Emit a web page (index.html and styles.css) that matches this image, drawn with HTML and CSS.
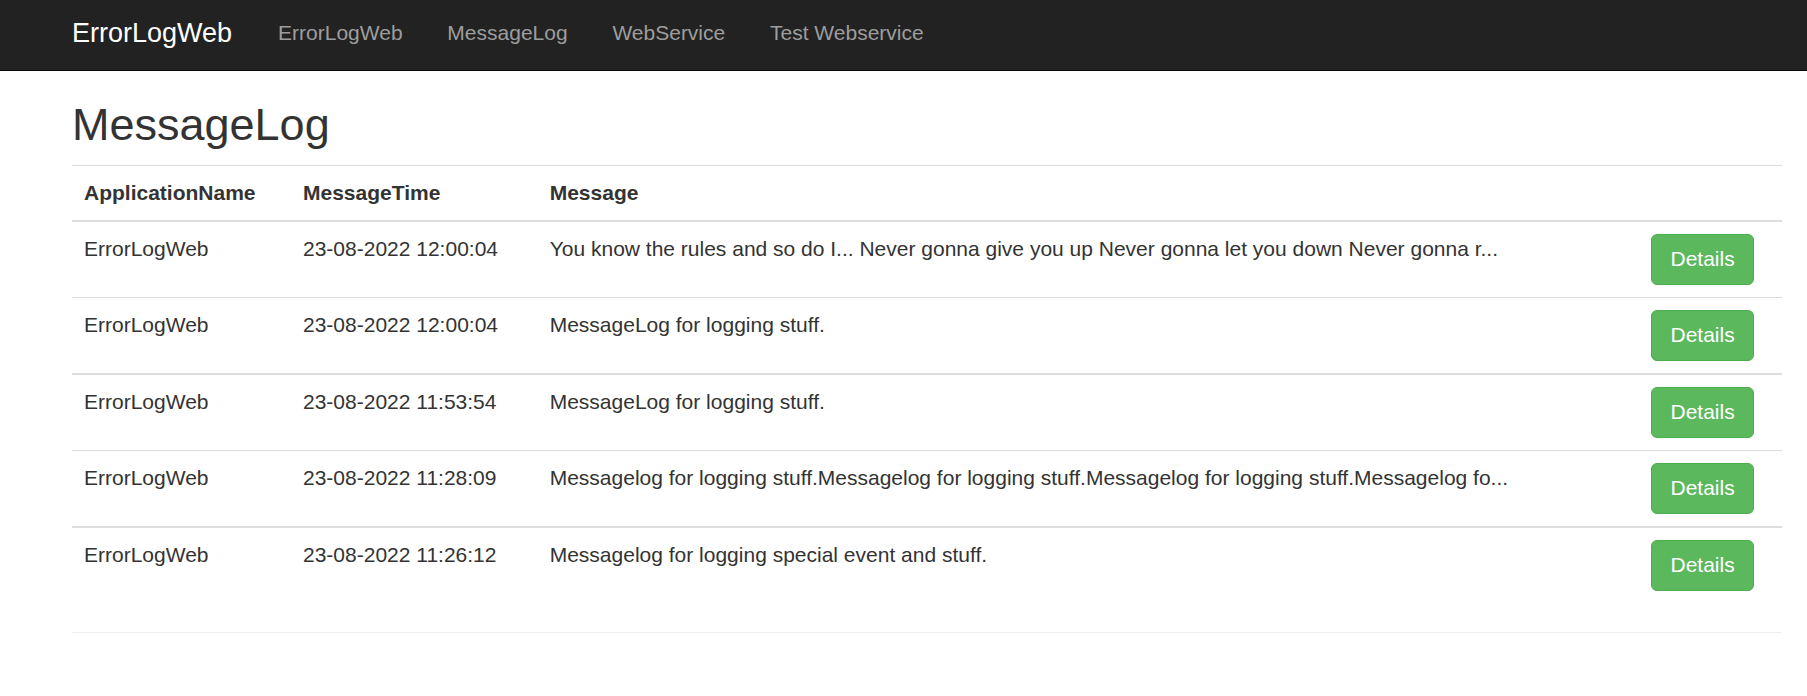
FILE: index.html
```html
<!DOCTYPE html>
<html lang="en">
<head>
<meta charset="utf-8">
<title>MessageLog - ErrorLogWeb</title>
<link rel="stylesheet" href="styles.css">
</head>
<body>
<nav class="navbar">
  <div class="navbar-inner">
    <a class="brand" href="#">ErrorLogWeb</a>
    <ul class="nav-links">
      <li><a href="#">ErrorLogWeb</a></li>
      <li><a href="#">MessageLog</a></li>
      <li><a href="#">WebService</a></li>
      <li><a href="#">Test Webservice</a></li>
    </ul>
  </div>
</nav>
<main class="body-content">
  <h2 class="page-title">MessageLog</h2>
  <table class="log-table">
    <colgroup>
      <col class="col-app">
      <col class="col-time">
      <col class="col-msg">
      <col class="col-action">
    </colgroup>
    <thead>
      <tr>
        <th>ApplicationName</th>
        <th>MessageTime</th>
        <th>Message</th>
        <th></th>
      </tr>
    </thead>
    <tbody>
      <tr class="row-thin">
        <td>ErrorLogWeb</td>
        <td>23-08-2022 12:00:04</td>
        <td>You know the rules and so do I... Never gonna give you up Never gonna let you down Never gonna r...</td>
        <td><a class="btn-success" href="#">Details</a></td>
      </tr>
      <tr class="row-thin">
        <td>ErrorLogWeb</td>
        <td>23-08-2022 12:00:04</td>
        <td>MessageLog for logging stuff.</td>
        <td><a class="btn-success" href="#">Details</a></td>
      </tr>
      <tr class="row-thick">
        <td>ErrorLogWeb</td>
        <td>23-08-2022 11:53:54</td>
        <td>MessageLog for logging stuff.</td>
        <td><a class="btn-success" href="#">Details</a></td>
      </tr>
      <tr class="row-thin">
        <td>ErrorLogWeb</td>
        <td>23-08-2022 11:28:09</td>
        <td>Messagelog for logging stuff.Messagelog for logging stuff.Messagelog for logging stuff.Messagelog fo...</td>
        <td><a class="btn-success" href="#">Details</a></td>
      </tr>
      <tr class="row-thick">
        <td>ErrorLogWeb</td>
        <td>23-08-2022 11:26:12</td>
        <td>Messagelog for logging special event and stuff.</td>
        <td><a class="btn-success" href="#">Details</a></td>
      </tr>
    </tbody>
  </table>
  <hr class="rule">
</main>
</body>
</html>
```

FILE: styles.css
```css
html, body {
  margin: 0;
  padding: 0;
  background: #fff;
}

body {
  font-family: "Liberation Sans", Arial, Helvetica, sans-serif;
  font-size: 21px;
  color: #333;
}

a {
  text-decoration: none;
}

/* Navbar */
.navbar {
  background: #222;
  border-bottom: 1px solid #080808;
  height: 70px;
}

.navbar-inner {
  display: flex;
  align-items: flex-start;
  padding-left: 72px;
}

.brand {
  display: block;
  color: #fff;
  font-size: 27px;
  line-height: 30px;
  padding: 18px 23.6px 0 0;
}

.nav-links {
  display: flex;
  list-style: none;
  margin: 0;
  padding: 0;
}

.nav-links a {
  display: block;
  color: #9d9d9d;
  font-size: 21px;
  line-height: 30px;
  padding: 18px 22.4px 0;
}

/* Main */
.body-content {
  padding: 0 25px 0 72px;
}

.page-title {
  margin: 29px 0 15px;
  font-size: 45px;
  font-weight: normal;
  line-height: 49.5px;
  color: #333;
}

.log-table {
  width: 100%;
  table-layout: fixed;
  border-collapse: separate;
  border-spacing: 0;
  margin-bottom: 29.5px;
}

.col-app { width: 219px; }
.col-time { width: 246.7px; }
.col-action { width: 143px; }

.log-table th,
.log-table td {
  padding: 12px;
  line-height: 30px;
  vertical-align: top;
  text-align: left;
  white-space: nowrap;
  overflow: hidden;
}

.log-table th {
  font-weight: bold;
  border-top: 1px solid #ddd;
  border-bottom: 2px solid #ddd;
}

.log-table tbody tr:first-child td {
  border-top: 0;
}

.row-thin td {
  border-top: 1px solid #ddd;
}

.row-thick td {
  border-top: 2px solid #ddd;
}

.btn-success {
  display: inline-block;
  vertical-align: top;
  background: #5cb85c;
  border: 1px solid #4cae4c;
  border-radius: 6px;
  color: #fff;
  font-size: 21px;
  line-height: 29px;
  padding: 9px 18.5px 11px;
}

.rule {
  margin: 0;
  border: 0;
  border-top: 1px solid #eee;
  height: 0;
}
```
